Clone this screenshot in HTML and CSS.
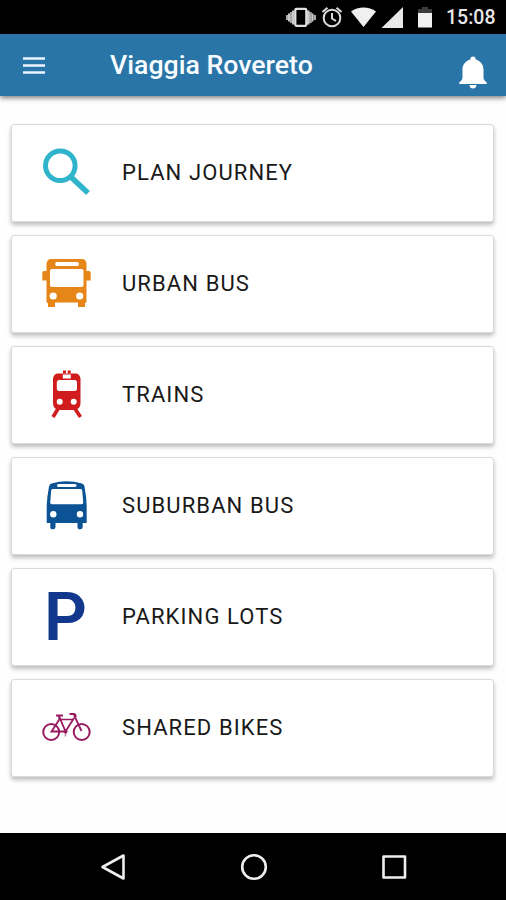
FILE: index.html
```html
<!DOCTYPE html>
<html lang="en">
<head>
    <meta charset="UTF-8">
    <meta name="viewport" content="width=device-width, initial-scale=1.0">
    <title>Viaggia Rovereto</title>
    <link rel="stylesheet" href="styles.css">
</head>
<body>
    <div class="statusbar">
        <svg class="status-icons" viewBox="0 0 150 34">
            <!-- Vibrate -->
            <path fill="#a8a8a8" d="M4 12h3v11H4zM22.500 12h3.200v11h-3.200zM0 15h2.500v5H0zM27.500 15H30v5h-2.500z"/>
            <path fill="#c8c8c8" d="M6 10.500h2.500v14H6zM21 10.500h2.500v14H21zM2 13.500h2v8H2zM25.500 13.500h2v8h-2z"/>
            <rect x="9.300" y="8.800" width="11" height="17" rx="1" fill="none" stroke="#e0e0e0" stroke-width="2.200"/>
            <!-- Alarm -->
            <g fill="none" stroke="#dcdcdc" stroke-width="2">
                <circle cx="46" cy="18" r="8.300"/>
                <path d="M46 13v5.500l4 2.500M36.500 12l5-4.300M55.500 12l-5-4.300"/>
            </g>
            <!-- Wifi, signal, battery -->
            <path fill="#f0f0f0" d="M65 11.500C72 6 83 6 90 11.500L77.500 27z"/>
            <path fill="#e8e8e8" d="M117 7v21H95.500z"/>
            <path fill="#3c3c3c" d="M132 13V9h4V7h6v2h4v4z"/>
            <path fill="#f0f0f0" d="M132 13h14v14.500h-14z"/>
        </svg>
        <span class="clock">15:08</span>
    </div>

    <div class="header">
        <svg class="menu-icon" viewBox="0 0 22 17">
            <path d="M0 1.500h22M0 8.500h22M0 15.500h22" stroke="#eaf5ff" stroke-width="2.400"/>
        </svg>
        <h1>Viaggia Rovereto</h1>
        <svg class="bell-icon" viewBox="0 0 28 33">
            <path fill="#fff" d="M14 0.500c1.800 0 2.700 1 2.700 2.900C21.500 4.600 24.500 8.500 24.500 13.500V21c0 2.500 1 4 3.200 5.300V28H.3v-1.700C2.500 25 3.500 23.500 3.500 21v-7.500C3.500 8.500 6.500 4.600 11.300 3.400 11.300 1.500 12.200 0.500 14 0.500zM10.500 29h7c-.2 2.400-1.500 3.500-3.500 3.500s-3.300-1.100-3.500-3.500z"/>
        </svg>
    </div>

    <div class="menu">
        <div class="card">
            <svg class="icon" viewBox="0 0 50 50">
                <g fill="none" stroke="#2fb4cc">
                    <circle cx="19.300" cy="17.700" r="14.800" stroke-width="5"/>
                    <path d="M30.500 29.500L47 45" stroke-width="5.500"/>
                </g>
            </svg>
            <span class="label">PLAN JOURNEY</span>
        </div>

        <div class="card">
            <svg class="icon" viewBox="0 0 50 50">
                <path fill="#e68619" d="M10 0h31q4 0 4.500 5V12h2.500q1.700 0 1.700 2v7.500h-4.200V43.500L44 44v4h-7v-4.500H14V48H7v-4l-1.500-.5v-22H1.300V14q0-2 1.700-2h2.500V5Q6 0 10 0z"/>
                <g fill="#fff">
                    <rect x="14.300" y="3" width="23.500" height="4" rx="1.500"/>
                    <rect x="9" y="10" width="33.500" height="18" rx="2"/>
                    <circle cx="12.200" cy="37" r="3.600"/>
                    <circle cx="38.700" cy="37" r="3.600"/>
                </g>
            </svg>
            <span class="label">URBAN BUS</span>
        </div>

        <div class="card">
            <svg class="icon" viewBox="0 0 50 50">
                <path fill="none" stroke="#d01c1c" stroke-width="3.600" d="M17.500 38L12 47M33.500 38l6 9"/>
                <path fill="#d01c1c" d="M17 3.500h17.500q4 0 5 5V33q0 6-6 7H18q-6-1-6-7V8.500q1-5 5-5zM22 .5h3v2.800h-3zM26.700.5h3v2.800h-3z"/>
                <g fill="#fff">
                    <rect x="21.800" y="4.500" width="8" height="4"/>
                    <rect x="15.800" y="10" width="20.200" height="11" rx="2.500"/>
                    <circle cx="18.700" cy="31.700" r="3"/>
                    <circle cx="32.700" cy="31.700" r="3"/>
                </g>
            </svg>
            <span class="label">TRAINS</span>
        </div>

        <div class="card">
            <svg class="icon" viewBox="0 0 50 50">
                <path fill="#0b5394" d="M10.500 2.500Q25.500-2 41 2.500q2 .7 2.500 3Q45.500 16 45.700 25v17h-4v4q0 2.300-2.600 2.300T36.500 46v-4h-22v4q0 2.300-2.600 2.300T9.300 46v-4H5.700V25Q6 16 8 5.500q.5-2.300 2.500-3z"/>
                <g fill="#fff">
                    <rect x="16" y="3" width="19.500" height="3" rx="1.500"/>
                    <path d="M11.500 8h28.300q1.200 0 1.400 1.500l1 12q0 1.800-1.600 1.800H10.800q-1.600 0-1.600-1.800l1-12Q10.400 8 11.500 8z"/>
                    <circle cx="12.300" cy="33.300" r="3.200"/>
                    <circle cx="39" cy="33.300" r="3.200"/>
                </g>
            </svg>
            <span class="label">SUBURBAN BUS</span>
        </div>

        <div class="card">
            <span class="icon parking">P</span>
            <span class="label">PARKING LOTS</span>
        </div>

        <div class="card">
            <svg class="icon" viewBox="0 0 50 50">
                <g fill="none" stroke="#981b62" stroke-width="2">
                    <circle cx="10.200" cy="29" r="8"/>
                    <circle cx="40.700" cy="29" r="8"/>
                    <path d="M10.500 28.500L19 15.500l5.500 13zM24.500 28.500L33 15M33 12l7.500 16" stroke-width="1.800"/>
                    <path d="M19 16.500h14" stroke-width="1.500"/>
                    <path d="M15 12.500h7M17.500 12.500l1.500 4M28.500 11h4q2.500 0 2 3"/>
                    <path d="M24.500 28v5.500" stroke="#b5829f" stroke-width="1.500"/>
                </g>
                <circle cx="24.500" cy="28.500" r="2" fill="#981b62"/>
            </svg>
            <span class="label">SHARED BIKES</span>
        </div>
    </div>

    <div class="navbar">
        <svg viewBox="0 0 28 28"><path d="M2.500 14L23.500 2.500v23z"/></svg>
        <svg viewBox="0 0 28 28"><circle cx="14" cy="14" r="11.800"/></svg>
        <svg viewBox="0 0 28 28"><rect x="3.500" y="3.500" width="21.500" height="21"/></svg>
    </div>
</body>
</html>
```

FILE: styles.css
```css
body {
    font-family: Roboto, sans-serif;
    background-color: #fefefe;
    margin: 0;
    height: 900px;
    display: flex;
    flex-direction: column;
    overflow: hidden;
}
.statusbar {
    height: 34px;
    background-color: #000;
    display: flex;
    align-items: center;
    justify-content: flex-end;
    padding-right: 11px;
}
.status-icons {
    width: 150px;
    height: 34px;
    margin-right: 10px;
}
.clock {
    color: #e8e8e8;
    font-size: 19.500px;
    font-weight: 500;
    line-height: 34px;
    padding-top: 2px;
    width: 49px;
    white-space: nowrap;
}
.header {
    height: 62px;
    background-color: #2975a8;
    box-shadow: 0 2px 5px rgba(0, 0, 0, 0.5);
    display: flex;
    align-items: center;
    padding: 0 19px 0 23px;
}
.menu-icon {
    width: 22px;
    height: 17px;
}
h1 {
    flex: 1;
    margin: 0 0 0 65px;
    color: #f8fcff;
    font-size: 26.700px;
    font-weight: 500;
    line-height: 32px;
}
.bell-icon {
    width: 28px;
    height: 33px;
    margin-top: 15px;
}
.menu {
    flex: 1;
    display: flex;
    flex-direction: column;
    gap: 13px;
    padding: 28px 12px 0 11px;
}
.card {
    box-sizing: border-box;
    height: 98px;
    background-color: #fff;
    border: 1px solid #dadada;
    border-radius: 3px;
    box-shadow: 0 3px 4px rgba(0, 0, 0, 0.25);
    display: flex;
    align-items: center;
    padding-left: 29px;
}
.icon {
    width: 50px;
    height: 50px;
    margin-right: 31px;
}
.label {
    color: #191919;
    font-size: 22px;
    letter-spacing: 1.100px;
    line-height: 28px;
}
.parking {
    box-sizing: border-box;
    height: 78px;
    padding-left: 3px;
    color: #11388c;
    font-size: 67px;
    font-weight: 600;
    line-height: 78px;
}
.navbar {
    height: 67px;
    background-color: #000;
    display: flex;
    align-items: center;
    justify-content: space-between;
    padding: 0 98px 0 100px;
}
.navbar svg {
    width: 28px;
    height: 28px;
    fill: none;
    stroke: #eee;
    stroke-width: 2.6;
    stroke-linejoin: round;
}
```
